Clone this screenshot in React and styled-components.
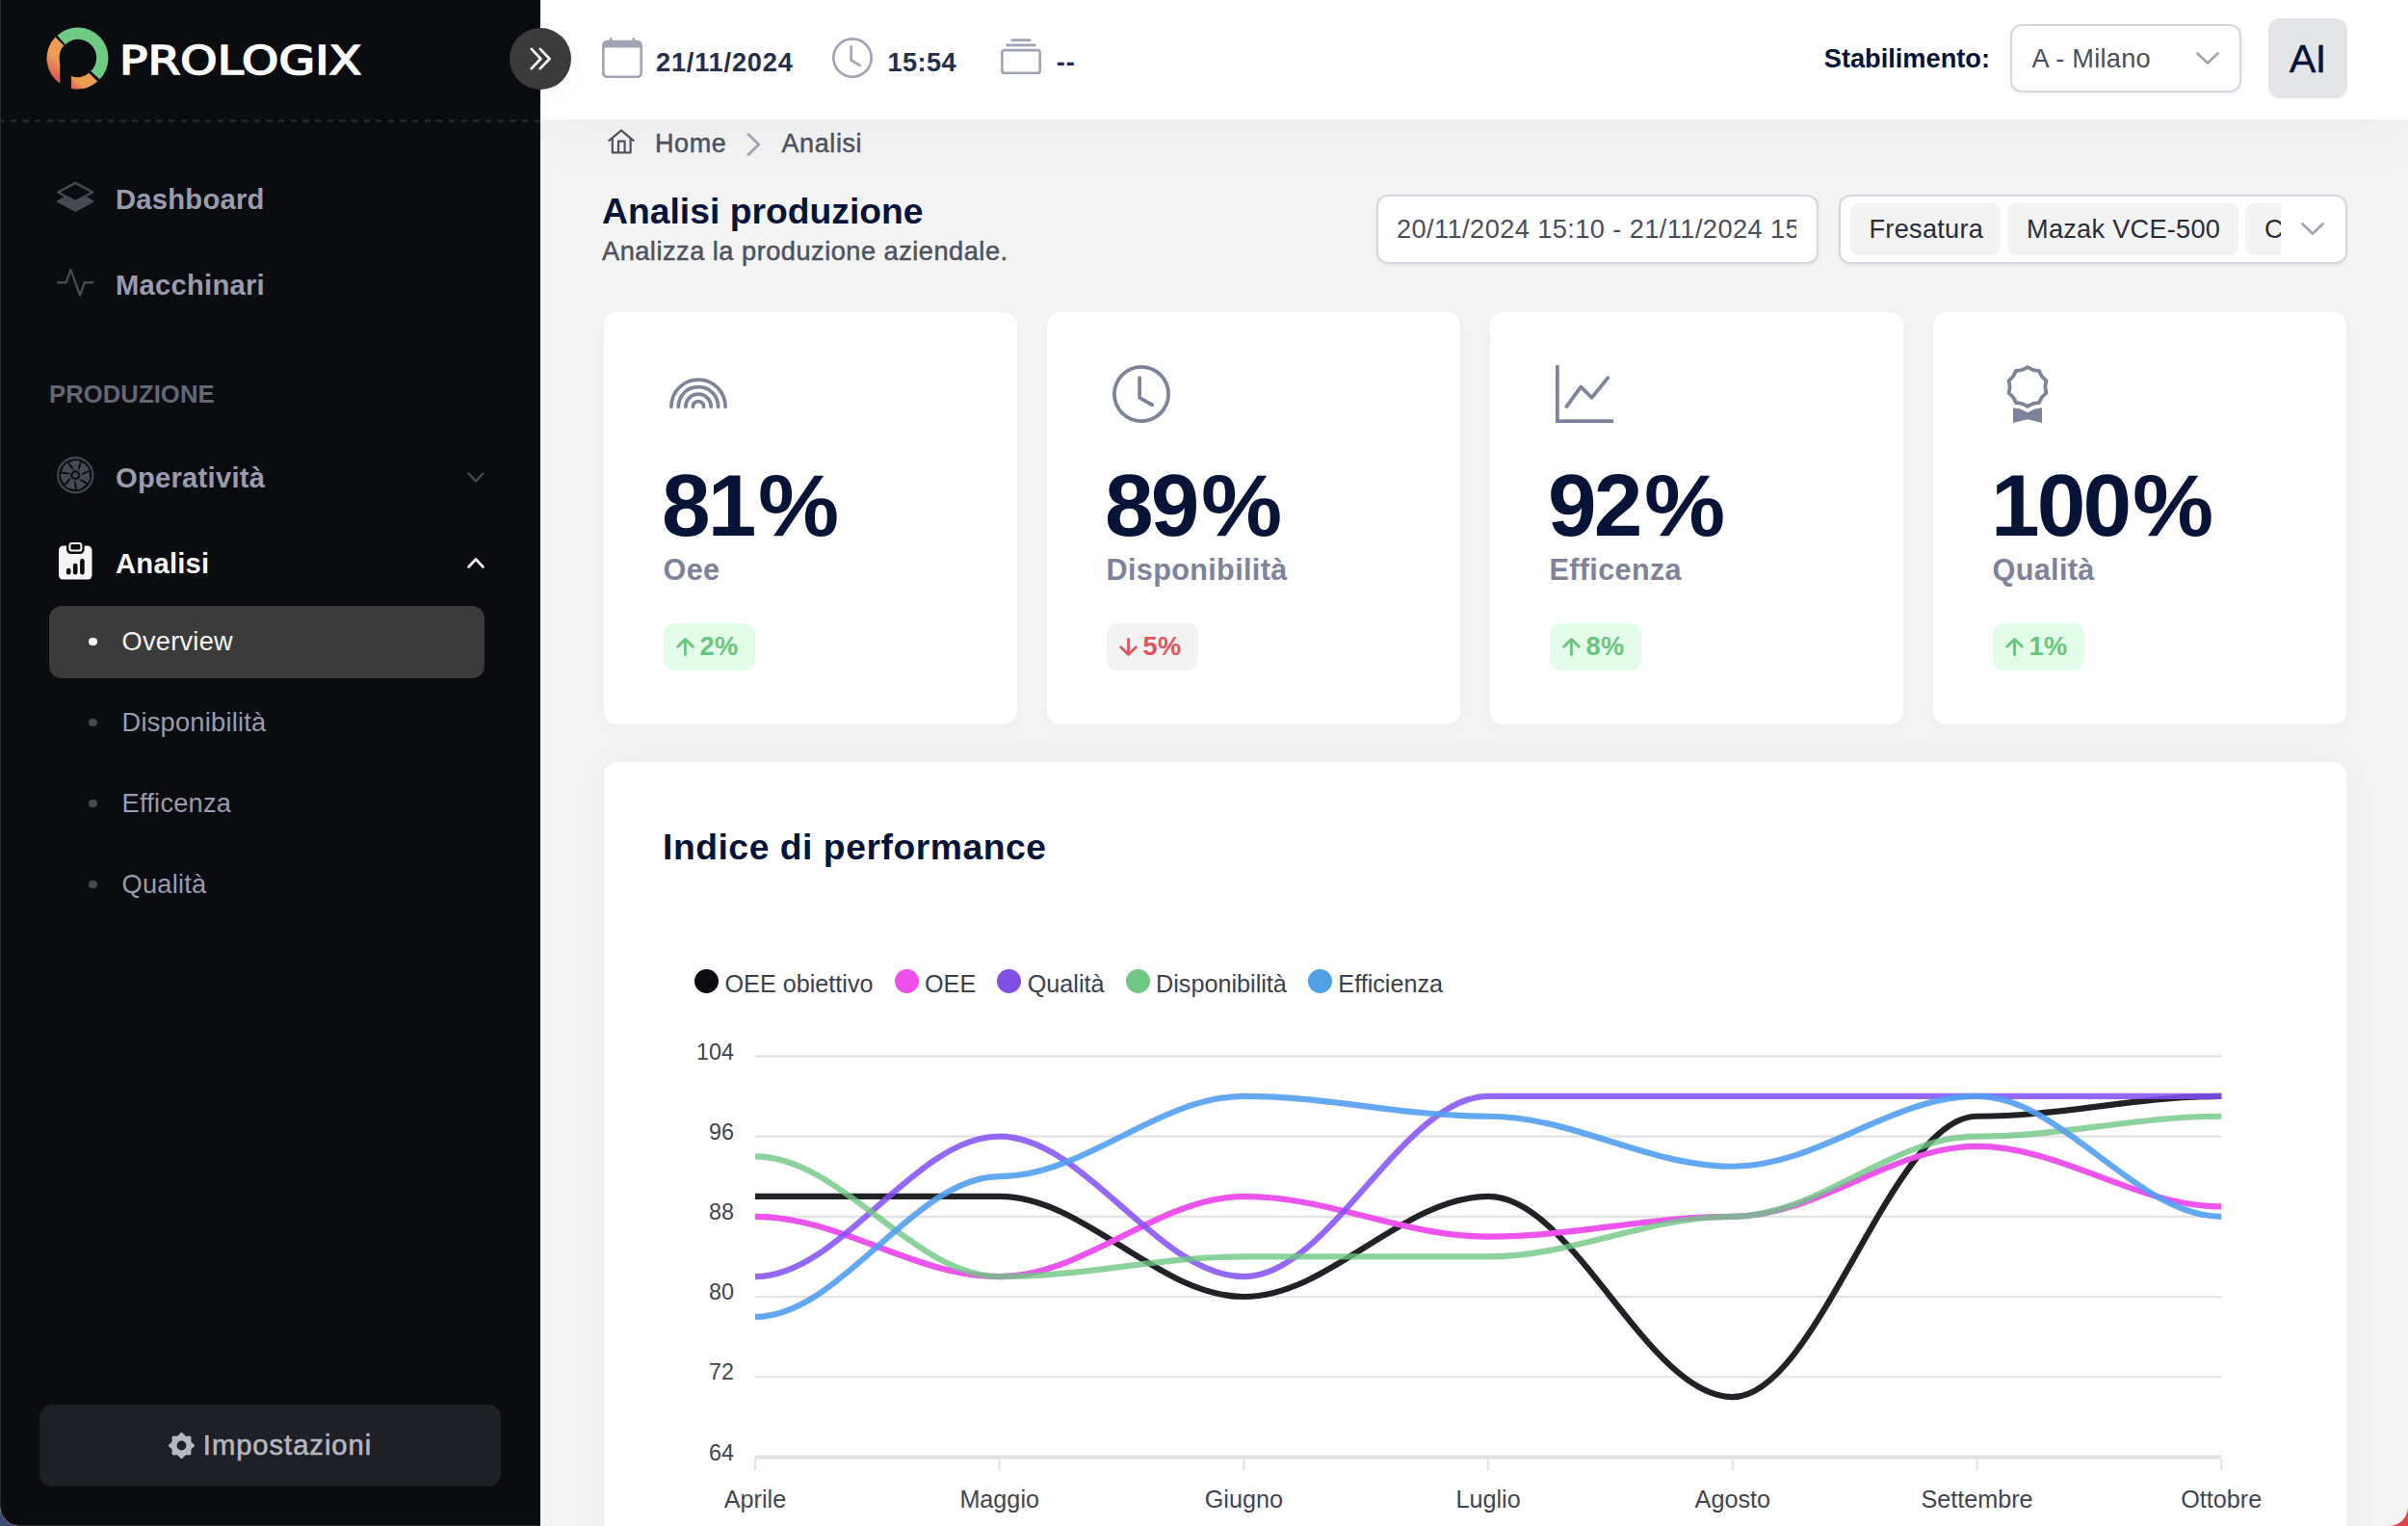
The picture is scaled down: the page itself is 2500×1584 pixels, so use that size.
import React, { useState } from 'react';
import styled, { createGlobalStyle } from 'styled-components';
import {
  BsActivity,
  BsAward,
  BsCalendar,
  BsClock,
  BsCollection,
  BsGraphUp,
  BsLayersHalf,
  BsRainbow,
} from 'react-icons/bs';

const GlobalStyle = createGlobalStyle`
  * { box-sizing: border-box; }
  html, body { margin: 0; padding: 0; }
  body {
    font-family: "Liberation Sans", Arial, sans-serif;
    overflow: hidden;
  }
  button { font-family: inherit; border: 0; padding: 0; }
`;

const Desktop = styled.div`
  width: 2500px;
  height: 1584px;
  background: linear-gradient(90deg, #3b4a70 0 50%, #e0444a 50%);
`;

const Window = styled.div`
  display: flex;
  width: 2500px;
  height: 1584px;
  overflow: hidden;
  background: #f4f4f4;
  border-radius: 0 0 20px 20px;
`;

/* ---------- sidebar ---------- */
const Sidebar = styled.aside`
  position: relative;
  z-index: 3;
  display: flex;
  flex-direction: column;
  flex: none;
  width: 561px;
  height: 1584px;
  background: #0b0c10;
  border-left: 1px solid #26272c;
  border-bottom: 1px solid #26272c;
  border-bottom-left-radius: 20px;
`;

const LogoBar = styled.div`
  display: flex;
  align-items: center;
  height: 124px;
  padding: 0 0 2px 47px;
`;

const LogoText = styled.span`
  margin-left: 9.5px;
  font-family: "DejaVu Sans", sans-serif;
  font-size: 41px;
  line-height: 60px;
  letter-spacing: 0.1px;
  color: #fff;
  -webkit-text-stroke: 1.7px #fff;
  transform: translateY(2px) scaleX(1.185);
  transform-origin: left center;
`;

const Divider = styled.div`
  height: 3px;
  background: repeating-linear-gradient(90deg, #222328 0 6.3px, transparent 6.3px 12.65px);
  background-position-x: -3px;
`;

const Toggle = styled.button`
  position: absolute;
  top: 29px;
  right: -32px;
  display: flex;
  align-items: center;
  justify-content: center;
  width: 64px;
  height: 64px;
  border-radius: 50%;
  background: #3b3b3b;
  box-shadow: 0 8px 28px rgba(0, 0, 0, 0.03);
`;

const Menu = styled.nav`
  flex: 1;
  padding: 35px 58px 0 50px;
`;

const MenuRow = styled.div`
  display: flex;
  align-items: center;
  height: 88.7px;
  padding-left: 8px;
  font-size: 29.2px;
  font-weight: 700;
  letter-spacing: 0.25px;
  color: ${(p) => (p.$active ? '#f5f5f5' : '#9a9cae')};
`;

const MenuIcon = styled.span`
  display: flex;
  justify-content: center;
  width: 39px;
  margin-right: 22px;
  padding-bottom: 4px;
  font-size: 38.5px;
  color: ${(p) => (p.$active ? '#f5f5f5' : '#464852')};
`;

const MenuLabel = styled.span`
  flex: 1;
  line-height: 34px;
  padding-top: 1px;
`;

const MenuHeading = styled.div`
  height: 112px;
  padding-top: 52px;
  font-size: 25.6px;
  line-height: 36px;
  font-weight: 700;
  letter-spacing: 0.1px;
  color: #636674;
`;

const SubItem = styled.div`
  display: flex;
  align-items: center;
  height: 74.8px;
  margin-bottom: 9.1px;
  padding: 0 0 0 41px;
  border-radius: 13px;
  font-size: 27.2px;
  letter-spacing: 0.25px;
  background: ${(p) => (p.$active ? '#3b3b3b' : 'transparent')};
  color: ${(p) => (p.$active ? '#f5f5f5' : '#9a9cae')};

  &::before {
    content: '';
    width: 8.6px;
    height: 8.6px;
    margin-right: 26px;
    border-radius: 50%;
    background: ${(p) => (p.$active ? '#f5f5f5' : '#464852')};
  }
`;

const SettingsButton = styled.button`
  display: flex;
  align-items: center;
  justify-content: center;
  gap: 9px;
  height: 85px;
  margin: 0 41px 40px 40px;
  border-radius: 13px;
  background: #1f2025;
  color: #b5b7c2;
  font-size: 29.2px;
  letter-spacing: 0.95px;
  -webkit-text-stroke: 0.6px #b5b7c2;

  svg { margin-bottom: 1px; }
`;

/* ---------- header ---------- */
const Main = styled.main`
  flex: 1;
  min-width: 0;
`;

const Header = styled.header`
  position: relative;
  z-index: 2;
  display: flex;
  align-items: center;
  height: 124px;
  padding: 0 63px 3px 64px;
  background: #fff;
  box-shadow: 0 20px 60px rgba(0, 0, 0, 0.032);
`;

const HeaderInfo = styled.div`
  display: flex;
  align-items: center;
  height: 60px;
  margin-right: ${(p) => p.$gap}px;
  padding-bottom: 2px;
  font-size: 42px;
  color: #a0a3b3;

  span {
    margin-left: ${(p) => p.$indent || 14}px;
    padding-top: 11px;
    font-size: 27.2px;
    line-height: 30px;
    font-weight: 700;
    letter-spacing: ${(p) => p.$spacing || 0.4}px;
    color: #252f4a;
  }
`;

const Plant = styled.div`
  display: flex;
  align-items: center;
  margin-left: auto;
  font-size: 27.2px;
  color: #071437;
  font-weight: 700;
`;

const Field = styled.div`
  display: flex;
  align-items: center;
  width: ${(p) => p.$width}px;
  height: 71.5px;
  margin-left: ${(p) => p.$left || 0}px;
  padding: ${(p) => p.$pad || '0 21px'};
  border: 2px solid #d5d7de;
  border-radius: 12px;
  background: #fff;
  box-shadow: 0 2px 4px rgba(0, 0, 0, 0.05);
  color: #4b4e5a;
  font-size: 27.2px;
  font-weight: 400;
  letter-spacing: ${(p) => p.$spacing || 0.25}px;
  white-space: nowrap;
  overflow: hidden;
`;

const Clip = styled.div`
  display: flex;
  flex: 1;
  min-width: 0;
  gap: 7.5px;
  overflow: hidden;
`;

const FieldArrow = styled.span`
  display: flex;
  flex: none;
  margin-left: 21.5px;
`;

const Tag = styled.span`
  flex: none;
  width: ${(p) => p.$width}px;
  height: 54px;
  padding-left: 20px;
  border-radius: 9px;
  background: #f3f3f4;
  color: #2b2d36;
  line-height: 53px;
`;

const Avatar = styled.div`
  display: flex;
  align-items: center;
  justify-content: center;
  width: 82.5px;
  height: 82.5px;
  margin-left: 28px;
  border-radius: 12px;
  background: #e4e5e8;
  color: #071437;
  font-size: 41.5px;
  font-weight: 400;
  letter-spacing: -0.5px;
  -webkit-text-stroke: 0.4px #071437;
`;

/* ---------- page ---------- */
const Page = styled.div`
  padding: 0 63px 0 64px;
`;

const Breadcrumb = styled.div`
  position: relative;
  z-index: 3;
  display: flex;
  align-items: center;
  height: 49px;
  margin-bottom: 29px;
  padding-left: 6px;
  color: #4e525e;
  font-size: 27px;
  letter-spacing: 0.6px;
  -webkit-text-stroke: 0.5px #4e525e;

  svg { flex: none; margin-bottom: 3px; }
  span { margin-left: 21px; padding-top: 2px; }
  span + svg { margin: 2px 0 0 21px; }
`;

const PageHead = styled.div`
  display: flex;
  align-items: flex-start;
  position: relative;
  z-index: 3;
  height: 71.5px;
  margin-bottom: 50.5px;
`;

const Heading = styled.div`
  flex: 1;

  h1 {
    margin: 0;
    font-size: 37.3px;
    line-height: 35px;
    color: #071437;
  }

  p {
    margin: 0;
    font-size: 27.2px;
    line-height: 47px;
    letter-spacing: 0.5px;
    color: #4e525e;
    -webkit-text-stroke: 0.5px #4e525e;
  }
`;

const KpiGrid = styled.div`
  display: grid;
  grid-template-columns: repeat(4, 1fr);
  gap: 31px;
  margin: 0 1px 38.5px 2px;
`;

const Card = styled.section`
  background: #fff;
  border-radius: 14px;
  box-shadow: 0 6px 16px rgba(0, 0, 0, 0.03);
`;

const KpiCard = styled(Card)`
  height: 428px;
  padding: 55px 0 0 61.5px;
`;

const KpiIcon = styled.div`
  height: 60px;
  margin-left: 6.5px;
  font-size: 60px;
  line-height: 0;
  color: #7e839b;
`;

const KpiValue = styled.div`
  display: flex;
  margin: 39.5px 0 3px -1.5px;
  font-size: 91px;
  line-height: 91px;
  font-weight: 700;
  letter-spacing: -2.8px;
  color: #071437;
`;

const Percent = styled.span`
  margin-left: 4px;
  transform: scaleX(1.04);
  transform-origin: left center;
`;

const KpiLabel = styled.div`
  font-size: 30.6px;
  line-height: 36px;
  font-weight: 700;
  letter-spacing: 0.35px;
  color: #7e839b;
`;

const Badge = styled.div`
  display: flex;
  align-items: center;
  gap: 6px;
  width: 95px;
  height: 49px;
  margin-top: 38.5px;
  padding: 0 0 1px 13px;
  border-radius: 11px;
  font-size: 27.2px;
  font-weight: 700;
  letter-spacing: 0.5px;
  background: ${(p) => (p.$down ? '#f3f3f3' : '#e4fdea')};
  color: ${(p) => (p.$down ? '#e05560' : '#68c580')};
`;

const ChartCard = styled(Card)`
  height: 860px;
  margin: 0 1px 0 2px;
  padding: 68px 0 0 61px;
  box-shadow: 0 0 40px rgba(0, 0, 0, 0.045);

  h2 {
    margin: 0;
    font-size: 37.3px;
    line-height: 40px;
    letter-spacing: 0.52px;
    color: #071437;
  }
`;

const Legend = styled.div`
  display: flex;
  gap: 22px;
  height: 25px;
  margin: 107px 0 28.5px 33px;
`;

const LegendItem = styled.div`
  display: flex;
  font-size: 25.2px;
  line-height: 25px;
  color: #3c404c;

  &::before {
    content: '';
    width: 25px;
    height: 25px;
    margin-right: 6.5px;
    border-radius: 50%;
    background: ${(p) => p.$color};
  }

  span { padding-top: 3.5px; }
`;

const Plot = styled.svg`
  display: block;

  text {
    font-size: 25.2px;
    fill: #42454f;
  }

  .tick { font-size: 23.4px; }
`;

/* ---------- icons ---------- */
const LogoMark = () => (
  <svg width="66" height="66" viewBox="48 28 66 66">
    <defs>
      <linearGradient id="left" x1="0.3" y1="0" x2="0" y2="1">
        <stop offset="0.35" stopColor="#ec9d50" />
        <stop offset="0.8" stopColor="#dc5560" />
      </linearGradient>
      <linearGradient id="bottom" x1="0" y1="1" x2="1" y2="0.3">
        <stop offset="0" stopColor="#dc5560" />
        <stop offset="0.4" stopColor="#ec9d50" />
      </linearGradient>
    </defs>
    <path d="M59.5 36.8A31.7 31.7 0 0 1 103.6 82.3L94.3 73.9A19.2 19.2 0 0 0 67.7 46.2Z" fill="#6fca85" />
    <path d="M57.4 38.6A31.7 31.7 0 0 0 62.3 86.8V67Q59.8 54 66.3 47.3Z" fill="url(#left)" />
    <path d="M101.2 84.6A31.7 31.7 0 0 1 74 91.9V79A19.2 19.2 0 0 0 92.4 75.8Z" fill="url(#bottom)" />
  </svg>
);

const Chevron = ({ w = 24, h = 13, up, color = '#a0a3b0', stroke = 2.6 }) => (
  <svg width={w} height={h} viewBox={`0 0 ${w} ${h}`} fill="none" stroke={color} strokeWidth={stroke} strokeLinecap="round" strokeLinejoin="round">
    <path d={up ? `M1.5 ${h - 1.5}L${w / 2} 1.5L${w - 1.5} ${h - 1.5}` : `M1.5 1.5L${w / 2} ${h - 1.5}L${w - 1.5} 1.5`} />
  </svg>
);

const FanIcon = () => (
  <svg width="38.5" height="38.5" viewBox="0 0 38 38">
    <circle cx="19" cy="19" r="17.9" fill="none" stroke="currentColor" strokeWidth="2" />
    {[0, 1, 2, 3, 4, 5, 6].map((i) => (
      <path
        key={i}
        d="M17.4 14.8Q17.2 10.5 12.6 6.2Q18 2.9 24 4.7Q21.4 9.2 21.8 14.9Q19.8 13.4 17.4 14.8Z"
        fill="currentColor"
        transform={`rotate(${(i * 360) / 7} 19 19)`}
      />
    ))}
    <circle cx="19" cy="19" r="2.7" fill="currentColor" />
  </svg>
);

const ClipboardIcon = () => (
  <svg width="34.5" height="38.5" viewBox="0 0 34.5 38.5">
    <rect x="0" y="3.6" width="34.5" height="34.9" rx="4.5" fill="currentColor" />
    <rect x="8" y="-3" width="18.6" height="15" rx="4.5" fill="#0b0c10" />
    <rect x="11.4" y="1" width="12" height="7.6" rx="2.4" fill="none" stroke="currentColor" strokeWidth="2" />
    <g stroke="#0b0c10" strokeWidth="4.6" strokeLinecap="round">
      <path d="M10.2 29V31.3M17.2 24V31.3M24.4 19.2V31.3" />
    </g>
  </svg>
);

const GearIcon = () => (
  <svg width="27" height="27" viewBox="0 0 27 27" fill="currentColor">
    <circle cx="13.5" cy="13.5" r="10.8" />
    {[0, 1, 2, 3, 4, 5, 6, 7].map((i) => (
      <path key={i} d="M9 4.5L12.2 0.6Q13.5 -0.5 14.8 0.6L18 4.5Z" transform={`rotate(${i * 45} 13.5 13.5)`} />
    ))}
    <circle cx="13.5" cy="13.5" r="4.9" fill="#1f2025" />
  </svg>
);

const HomeIcon = () => (
  <svg width="28" height="26" viewBox="0 0 28 26" fill="none" stroke="currentColor" strokeWidth="2.2" strokeLinecap="round" strokeLinejoin="round">
    <path d="M1.4 11.8L14 1.4L26.6 11.8M4.8 9.6V24.4H23.6V9.6M11 24V12.6H17.6V24" />
  </svg>
);

const Arrow = ({ down }) => (
  <svg width="19" height="19" viewBox="0 0 19 19" fill="none" stroke="currentColor" strokeWidth="2.8" strokeLinecap="round" strokeLinejoin="round">
    <path d={down ? 'M9.5 1.4V17.2M1.6 9.8L9.5 17.4L17.4 9.8' : 'M9.5 17.6V1.8M1.6 9.2L9.5 1.6L17.4 9.2'} />
  </svg>
);

/* ---------- data ---------- */
const subItems = ['Overview', 'Disponibilità', 'Efficenza', 'Qualità'];

const kpis = [
  { label: 'Oee', value: 81, delta: '2%', icon: <BsRainbow /> },
  { label: 'Disponibilità', value: 89, delta: '5%', down: true, icon: <BsClock /> },
  { label: 'Efficenza', value: 92, delta: '8%', icon: <BsGraphUp /> },
  { label: 'Qualità', value: 100, delta: '1%', icon: <BsAward /> },
];

const months = ['Aprile', 'Maggio', 'Giugno', 'Luglio', 'Agosto', 'Settembre', 'Ottobre'];
const ticks = [104, 96, 88, 80, 72, 64];

const series = [
  { name: 'OEE obiettivo', color: '#0b0c10', opacity: 0.91, data: [90, 90, 80, 90, 70, 98, 100] },
  { name: 'OEE', color: '#ed50ed', opacity: 0.98, data: [88, 82, 90, 86, 88, 95, 89] },
  { name: 'Qualità', color: '#8051e4', stroke: '#8450f6', opacity: 0.86, data: [82, 96, 82, 100, 100, 100, 100] },
  { name: 'Disponibilità', color: '#6fc784', opacity: 0.8, data: [94, 82, 84, 84, 88, 96, 98] },
  { name: 'Efficienza', color: '#519fe5', stroke: '#519ff2', opacity: 0.9, data: [78, 92, 100, 98, 93, 100, 88] },
];

const X0 = 785;
const STEP = 253.7;
const px = (i) => X0 + i * STEP;
const py = (v) => 1513.5 - (v - 64) * 10.405;

// horizontal tangents on every point
const curve = (data) =>
  data.reduce((d, v, i) => {
    if (i === 0) return `M${px(0)} ${py(v)}`;
    const k = STEP * 0.35;
    return `${d}C${px(i - 1) + k} ${py(data[i - 1])} ${px(i) - k} ${py(v)} ${px(i)} ${py(v)}`;
  }, '');

const Chart = () => (
  <Plot width="1700" height="524" viewBox="689 1060 1700 524">
    {ticks.map((t) => (
      <g key={t}>
        <line x1={X0} x2={px(6)} y1={py(t)} y2={py(t)} stroke="#e1e2e4" strokeWidth={t === 64 ? 4 : 2.2} />
        <text className="tick" x="763" y={py(t) + 3.2} textAnchor="end">{t}</text>
      </g>
    ))}
    {months.map((m, i) => (
      <g key={m}>
        <line x1={px(i)} x2={px(i)} y1="1515" y2="1527.5" stroke="#e1e2e4" strokeWidth="2" />
        <text x={px(i)} y="1565.5" textAnchor="middle">{m}</text>
      </g>
    ))}
    {series.map((s) => (
      <path key={s.name} d={curve(s.data)} fill="none" stroke={s.stroke || s.color} strokeOpacity={s.opacity} strokeWidth="6.2" />
    ))}
  </Plot>
);

export default function App() {
  const [page, setPage] = useState('Overview');

  return (
    <Desktop>
      <GlobalStyle />
      <Window>
        <Sidebar>
          <LogoBar>
            <LogoMark />
            <LogoText>PROLOGIX</LogoText>
          </LogoBar>
          <Divider />
          <Toggle>
            <svg width="24" height="24" viewBox="0 0 24 24" fill="none" stroke="#fff" strokeWidth="2.6" strokeLinecap="round" strokeLinejoin="round">
              <path d="M2.8 1.8L12.4 12L2.8 22.2M11.8 1.8L21.6 12L11.8 22.2" />
            </svg>
          </Toggle>
          <Menu>
            <MenuRow>
              <MenuIcon><BsLayersHalf /></MenuIcon>
              <MenuLabel>Dashboard</MenuLabel>
            </MenuRow>
            <MenuRow>
              <MenuIcon><BsActivity /></MenuIcon>
              <MenuLabel>Macchinari</MenuLabel>
            </MenuRow>
            <MenuHeading>PRODUZIONE</MenuHeading>
            <MenuRow>
              <MenuIcon><FanIcon /></MenuIcon>
              <MenuLabel>Operatività</MenuLabel>
              <Chevron w={18} h={11} color="#464852" stroke={2.4} />
            </MenuRow>
            <MenuRow $active>
              <MenuIcon $active><ClipboardIcon /></MenuIcon>
              <MenuLabel>Analisi</MenuLabel>
              <Chevron w={18} h={11} color="#f5f5f5" stroke={2.6} up />
            </MenuRow>
            {subItems.map((item) => (
              <SubItem key={item} $active={item === page} onClick={() => setPage(item)}>
                {item}
              </SubItem>
            ))}
          </Menu>
          <SettingsButton>
            <GearIcon />
            Impostazioni
          </SettingsButton>
        </Sidebar>

        <Main>
          <Header>
            <HeaderInfo $gap={40} $spacing={0.8}><BsCalendar /><span>21/11/2024</span></HeaderInfo>
            <HeaderInfo $gap={46} $indent={16}><BsClock /><span>15:54</span></HeaderInfo>
            <HeaderInfo $gap={0} $indent={15.5} $spacing={1}><BsCollection /><span>--</span></HeaderInfo>
            <Plant>
              Stabilimento:
              <Field $width={240} $left={20.5}>
                <Clip>A - Milano</Clip>
                <Chevron />
              </Field>
              <Avatar>AI</Avatar>
            </Plant>
          </Header>

          <Page>
            <Breadcrumb>
              <HomeIcon />
              <span>Home</span>
              <svg width="15" height="24" viewBox="0 0 15 24" fill="none" stroke="#a0a3b0" strokeWidth="2.8" strokeLinecap="round" strokeLinejoin="round">
                <path d="M2 1.6L12.8 12L2 22.4" />
              </svg>
              <span>Analisi</span>
            </Breadcrumb>

            <PageHead>
              <Heading>
                <h1>Analisi produzione</h1>
                <p>Analizza la produzione aziendale.</p>
              </Heading>
              <Field $width={459} $pad="1px 21px 0 19px" $spacing={0.42}>
                <Clip>20/11/2024 15:10 - 21/11/2024 15:10</Clip>
              </Field>
              <Field $width={528.5} $left={20.5} $pad="0 22px 0 10px">
                <Clip>
                  <Tag $width={156}>Fresatura</Tag>
                  <Tag $width={239.5}>Mazak VCE-500</Tag>
                  <Tag $width={120}>C</Tag>
                </Clip>
                <FieldArrow><Chevron /></FieldArrow>
              </Field>
            </PageHead>

            <KpiGrid>
              {kpis.map((k) => (
                <KpiCard key={k.label}>
                  <KpiIcon>{k.icon}</KpiIcon>
                  <KpiValue>{k.value}<Percent>%</Percent></KpiValue>
                  <KpiLabel>{k.label}</KpiLabel>
                  <Badge $down={k.down}>
                    <Arrow down={k.down} />
                    {k.delta}
                  </Badge>
                </KpiCard>
              ))}
            </KpiGrid>

            <ChartCard>
              <h2>Indice di performance</h2>
              <Legend>
                {series.map((s) => (
                  <LegendItem key={s.name} $color={s.color}><span>{s.name}</span></LegendItem>
                ))}
              </Legend>
              <Chart />
            </ChartCard>
          </Page>
        </Main>
      </Window>
    </Desktop>
  );
}
